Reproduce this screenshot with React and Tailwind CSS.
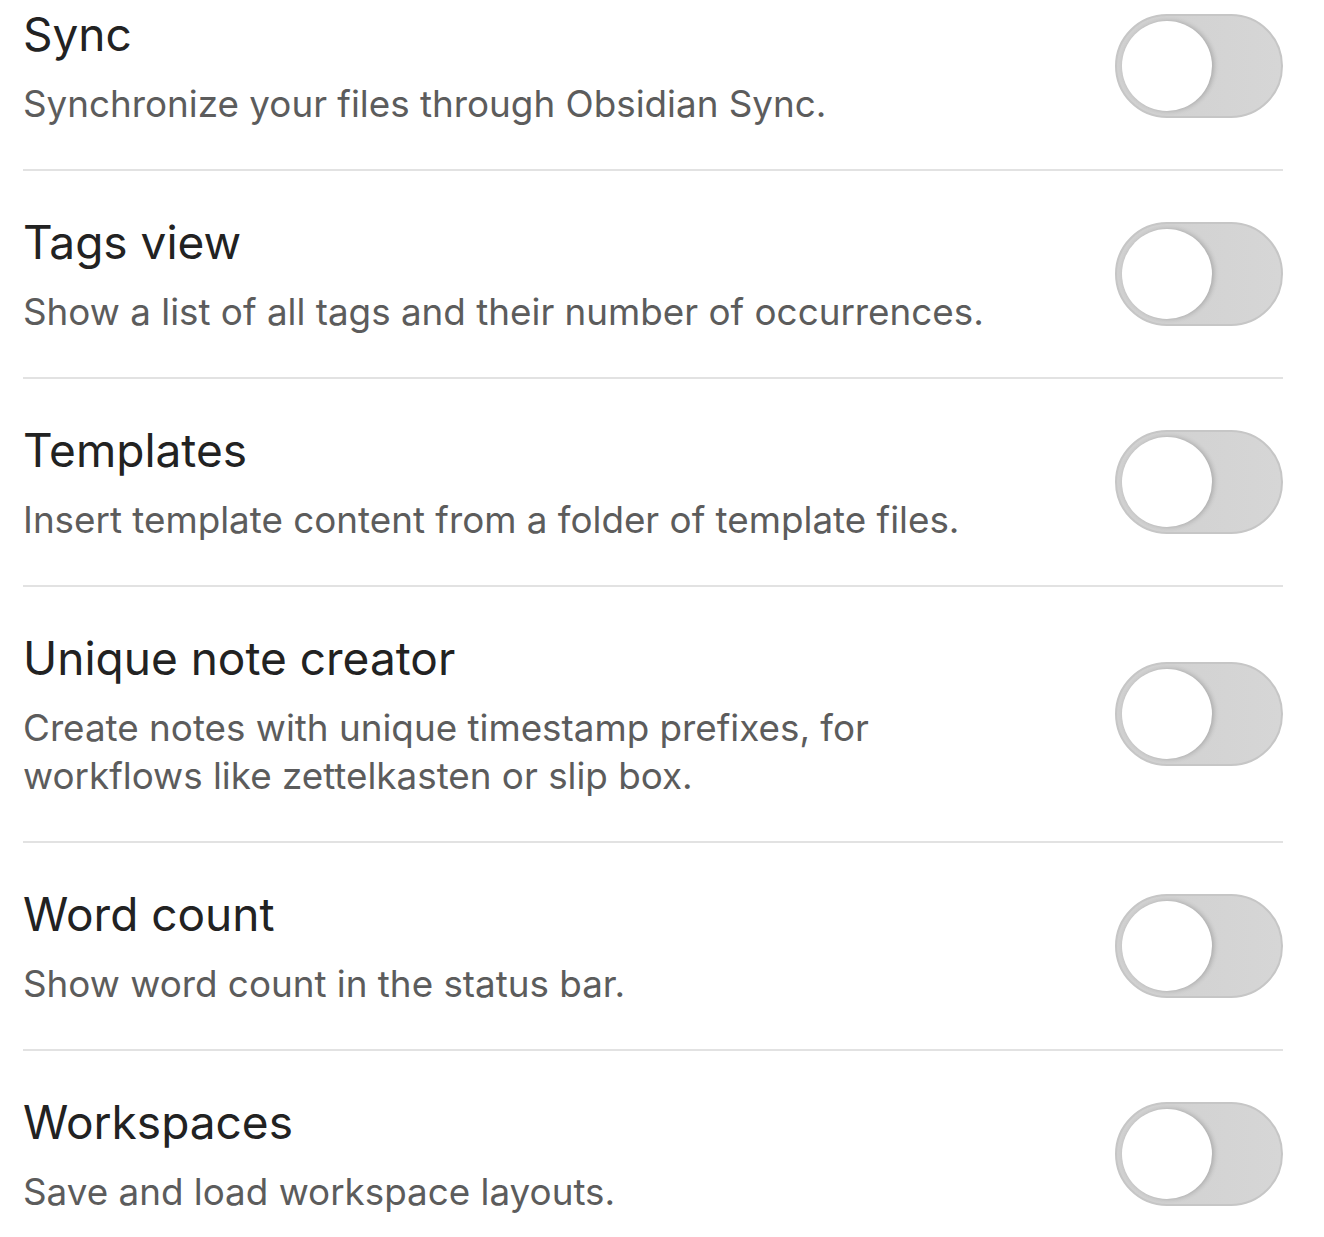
const SETTINGS = [
  { id: 'sync', name: 'Sync', description: 'Synchronize your files through Obsidian Sync.' },
  { id: 'tags', name: 'Tags view', description: 'Show a list of all tags and their number of occurrences.' },
  { id: 'templates', name: 'Templates', description: 'Insert template content from a folder of template files.' },
  {
    id: 'unique',
    name: 'Unique note creator',
    description: 'Create notes with unique timestamp prefixes, for workflows like zettelkasten or slip box.',
  },
  { id: 'word-count', name: 'Word count', description: 'Show word count in the status bar.' },
  { id: 'workspaces', name: 'Workspaces', description: 'Save and load workspace layouts.' },
]

function Toggle() {
  return (
    <div className="flex h-[104px] w-[168px] shrink-0 items-center rounded-full border-2 border-[#c6c6c6] bg-[linear-gradient(90deg,#d0d0d0_0%,#d6d6d6_100%)] pl-[5px]">
      <div className="h-[90px] w-[90px] rounded-full bg-white shadow-[2px_0_5px_rgba(0,0,0,0.2)]" />
    </div>
  )
}

function SettingRow({ setting }) {
  return (
    <div className="flex items-center border-b-2 border-[#e2e2e2] py-[41px]">
      <div className="w-[1000px] pr-4">
        <div className="text-[46px] leading-[60px] text-[#222222]">{setting.name}</div>
        <div className="mt-4 text-[36.8px] leading-[48px] text-[#5c5c5c]">{setting.description}</div>
      </div>
      <div className="ml-auto">
        <Toggle />
      </div>
    </div>
  )
}

export default function App() {
  return (
    <div className="h-[1237px] overflow-hidden bg-white font-['Inter',sans-serif]">
      <div className="-mt-[37px] ml-[23px] mr-[41px]">
        {SETTINGS.map((setting) => (
          <SettingRow key={setting.id} setting={setting} />
        ))}
      </div>
    </div>
  )
}
